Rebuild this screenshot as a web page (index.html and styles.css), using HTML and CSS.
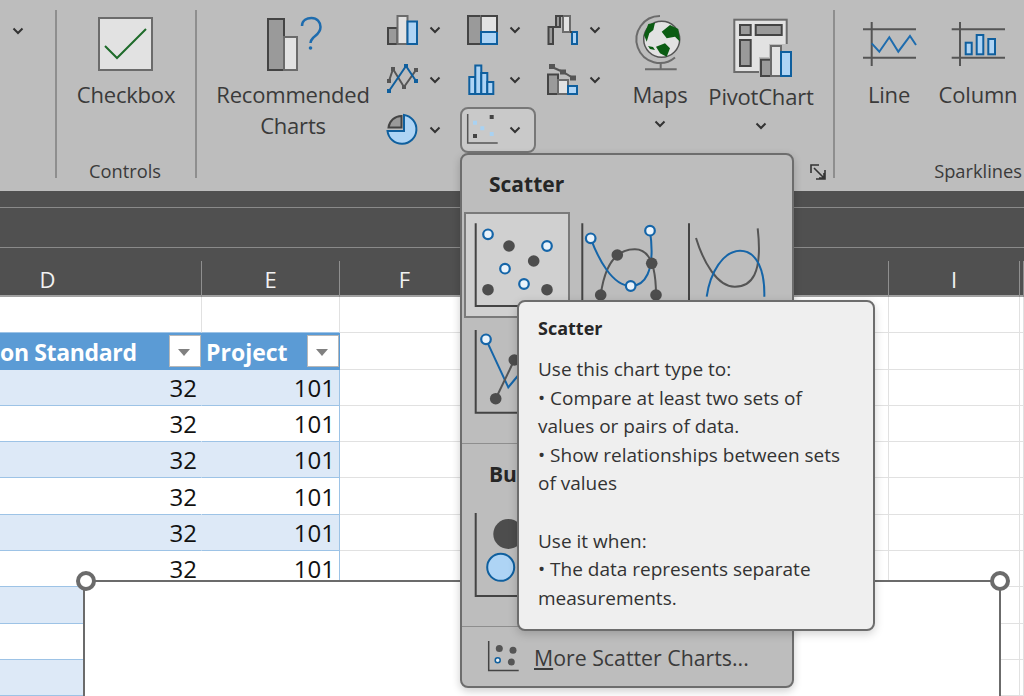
FILE: index.html
```html
<!DOCTYPE html>
<html lang="en">
<head>
    <meta charset="UTF-8">
    <meta name="viewport" content="width=device-width, initial-scale=1.0">
    <title>Insert Scatter Chart</title>
    <link rel="stylesheet" href="styles.css">
</head>
<body>
    <svg class="defs" width="0" height="0">
        <symbol id="chev" viewBox="0 0 12 8"><path d="M1.5 1.5 6 6l4.500-4.500" fill="none" stroke="#333" stroke-width="2"/></symbol>
    </svg>

    <div class="ribbon">
        <div class="group stub">
            <svg class="chev"><use href="#chev"/></svg>
        </div>
        <div class="sep"></div>
        <div class="group controls">
            <div class="group-body">
                <div class="big-btn wide">
                    <svg class="big-icon" viewBox="0 0 64 64">
                        <rect class="sheet" x="5" y="2" width="53" height="52"/>
                        <path d="M11 30 23 42 52 13" fill="none" stroke="#1e6b2a" stroke-width="2"/>
                    </svg>
                    <span>Checkbox</span>
                </div>
            </div>
            <div class="group-name"><span></span><span>Controls</span><span></span></div>
        </div>
        <div class="sep"></div>
        <div class="group charts">
            <div class="group-body">
                <div class="big-btn recommended">
                    <svg class="big-icon" viewBox="0 0 64 64">
                        <rect class="grey" x="7" y="3" width="16" height="51"/>
                        <rect class="pale" x="23" y="21" width="13" height="33"/>
                        <path d="M41 10C41 4 46 2 50.500 2 56 2 59.500 6 59.500 11 59.500 17 55 19 52 22 50 24 49.500 25 49.500 27" fill="none" stroke="#1e6cae" stroke-width="2.500"/>
                        <circle cx="49.500" cy="32" r="1.800" fill="#1e6cae"/>
                    </svg>
                    <span>Recommended<br>Charts</span>
                </div>
                <div class="chart-grid">
                    <div class="small-btn">
                        <svg class="small-icon" viewBox="0 0 32 32">
                            <rect class="grey" x="2" y="14" width="9.500" height="16"/>
                            <rect class="pale" x="11.500" y="2" width="10" height="28"/>
                            <rect class="blue" x="21.500" y="7.500" width="9.500" height="22.500"/>
                        </svg>
                        <svg class="chev"><use href="#chev"/></svg>
                    </div>
                    <div class="small-btn">
                        <svg class="small-icon" viewBox="0 0 32 32">
                            <rect class="grey" x="2" y="2" width="13" height="28"/>
                            <rect class="pale" x="15" y="2" width="16" height="16"/>
                            <rect class="blue" x="15" y="18" width="16" height="12"/>
                            <path d="M15 2H31V18" fill="none" stroke="#444" stroke-width="2"/>
                        </svg>
                        <svg class="chev"><use href="#chev"/></svg>
                    </div>
                    <div class="small-btn">
                        <svg class="small-icon" viewBox="0 0 32 32">
                            <rect class="grey" x="2.500" y="13" width="4.500" height="17"/>
                            <rect class="grey" x="10" y="2" width="4" height="11"/>
                            <rect class="pale" x="17" y="2" width="7" height="16"/>
                            <rect class="blue" x="26" y="18" width="5" height="12"/>
                            <path d="M7 13H10M14 2H17M24 18H26" stroke="#444" stroke-width="2"/>
                        </svg>
                        <svg class="chev"><use href="#chev"/></svg>
                    </div>
                    <div class="small-btn">
                        <svg class="small-icon" viewBox="0 0 32 32">
                            <path d="M3 17 7 5 18 23 30 6" fill="none" stroke="#555" stroke-width="2"/>
                            <path d="M3 27 20 2 30 17" fill="none" stroke="#0f5f9e" stroke-width="2"/>
                            <path d="M1 15h4v4H1zM5 3h4v4H5zM16 21h4v4h-4zM28 4h4v4h-4z" fill="#555"/>
                            <path d="M1 25h4v4H1zM18 0h4v4h-4zM28 15h4v4h-4z" fill="#0f5f9e"/>
                        </svg>
                        <svg class="chev"><use href="#chev"/></svg>
                    </div>
                    <div class="small-btn">
                        <svg class="small-icon" viewBox="0 0 32 32">
                            <rect class="blue" x="3.300" y="13" width="6" height="17"/>
                            <rect class="blue" x="9.300" y="1.500" width="6" height="28.500"/>
                            <rect class="blue" x="15.300" y="9" width="6" height="21"/>
                            <rect class="blue" x="21.300" y="18" width="6" height="12"/>
                        </svg>
                        <svg class="chev"><use href="#chev"/></svg>
                    </div>
                    <div class="small-btn">
                        <svg class="small-icon" viewBox="0 0 32 32">
                            <rect class="grey" x="2" y="10.500" width="10" height="19.500"/>
                            <rect class="pale" x="12" y="16" width="10" height="14"/>
                            <rect class="blue" x="22" y="22" width="9" height="8"/>
                            <path d="M6 3 17 8 27 14" fill="none" stroke="#555" stroke-width="2"/>
                            <path d="M3 0h6v5H3zM14 5.500h6v5h-6zM24 11.500h6v5h-6z" fill="#555"/>
                        </svg>
                        <svg class="chev"><use href="#chev"/></svg>
                    </div>
                    <div class="small-btn">
                        <svg class="small-icon" viewBox="0 0 32 32">
                            <path class="blue" d="M18 1A14.500 14.500 0 1 1 1.500 17H18Z"/>
                            <path class="grey" d="M15.500 2A13 13 0 0 0 2.500 13.500H15.500Z"/>
                        </svg>
                        <svg class="chev"><use href="#chev"/></svg>
                    </div>
                    <div class="small-btn open">
                        <svg class="small-icon" viewBox="0 0 32 32">
                            <path d="M1.700 0V29H31.700" fill="none" stroke="#555" stroke-width="1.500"/>
                            <path d="M23.700 1h4v4h-4zM7 20h4v4H7z" fill="#444"/>
                            <path d="M7 6.700h4v4H7zM14.300 12.300h4v4h-4zM23.700 18h4v4h-4z" fill="#a9d2f2"/>
                        </svg>
                        <svg class="chev"><use href="#chev"/></svg>
                    </div>
                </div>
                <div class="big-btn maps">
                    <svg class="big-icon" viewBox="0 0 64 64">
                        <circle cx="33.700" cy="23.300" r="18" fill="#e2e2e2" stroke="#555" stroke-width="1.500"/>
                        <path d="M16 19 20.300 8 27 6.700 25.300 14 21.300 17.300 18.700 25.700Z" fill="#0b5c13"/>
                        <path d="M33.700 15.700 42 9 50.300 13 52 25.700 47 20.700 38.700 22.300Z" fill="#0b5c13"/>
                        <path d="M28 30.700 37 27.300 42 32.300 38.700 40.700 32 37.300Z" fill="#0b5c13"/>
                        <path d="M20 30 25 31 27 34 22 33Z" fill="#0b5c13"/>
                        <path d="M32 0A23.500 23.500 0 1 0 47 41.500" fill="none" stroke="#6b6b6b" stroke-width="2"/>
                        <path d="M32.700 46.700V53.300M17 53.300H48.700" fill="none" stroke="#6b6b6b" stroke-width="2"/>
                    </svg>
                    <span>Maps</span>
                    <svg class="chev"><use href="#chev"/></svg>
                </div>
                <div class="big-btn pivot">
                    <svg class="big-icon" viewBox="0 0 64 64">
                        <rect class="sheet" x="5.300" y="1.700" width="52.400" height="52.300"/>
                        <rect class="grey" x="11" y="7" width="10.700" height="10"/>
                        <rect class="grey" x="26.700" y="7" width="26" height="10"/>
                        <rect class="grey" x="11" y="22" width="10.700" height="26"/>
                        <path d="M30 39H40V26H64V60H30Z" fill="#bdbdbd"/>
                        <rect class="grey" x="32" y="41.700" width="10" height="16.300"/>
                        <rect class="pale" x="42" y="28" width="10" height="30"/>
                        <rect class="blue" x="52" y="34" width="10" height="24"/>
                    </svg>
                    <span>PivotChart</span>
                    <svg class="chev"><use href="#chev"/></svg>
                </div>
            </div>
            <div class="group-name launcher-row">
                <svg class="launcher" viewBox="0 0 16 16">
                    <path d="M15 6V15H6M1 9V1H9M4 4 14 14M9 14H14V9" fill="none" stroke="#333" stroke-width="1.600"/>
                </svg>
            </div>
        </div>
        <div class="sep"></div>
        <div class="group sparklines">
            <div class="group-body">
                <div class="big-btn spark-line">
                    <svg class="big-icon" viewBox="0 0 64 64">
                        <path d="M14.700 6V50M6 13.300H59M6 41.700H59" fill="none" stroke="#555" stroke-width="2"/>
                        <path d="M14.700 27.300 22.300 35.700 32.300 21.300 41.300 35.700 53 20 59 29" fill="none" stroke="#1e6cae" stroke-width="2"/>
                    </svg>
                    <span>Line</span>
                </div>
                <div class="big-btn spark-column">
                    <svg class="big-icon" viewBox="0 0 64 64">
                        <path d="M14 6V50M5.700 13.300H59M5.700 41.700H59" fill="none" stroke="#555" stroke-width="2"/>
                        <rect class="blue" x="19.700" y="26.700" width="6" height="11.600"/>
                        <rect class="blue" x="30.700" y="19" width="6.600" height="19.300"/>
                        <rect class="blue" x="42.300" y="23" width="6.700" height="15.300"/>
                    </svg>
                    <span>Column</span>
                </div>
            </div>
            <div class="group-name spark-name"><span>Sparklines</span></div>
        </div>
    </div>

    <div class="formula-bar"></div>

    <div class="sheet-grid">
        <div class="col-heads">
            <div class="col-d">D</div><div>E</div><div>F</div><div>G</div><div>H</div><div>I</div><div></div>
        </div>
        <div class="row blank"><div class="cell"></div><div class="cell"></div><div class="cell"></div><div class="cell"></div><div class="cell"></div><div class="cell"></div><div class="cell"></div></div>
        <div class="row table-head">
            <div class="cell"><span class="head-cut">on Standard</span><span class="filter"></span></div>
            <div class="cell"><span>Project</span><span class="filter"></span></div>
            <div class="cell"></div><div class="cell"></div><div class="cell"></div><div class="cell"></div><div class="cell"></div>
        </div>
        <div class="row band"><div class="cell num">32</div><div class="cell num">101</div><div class="cell"></div><div class="cell"></div><div class="cell"></div><div class="cell"></div><div class="cell"></div></div>
        <div class="row"><div class="cell num">32</div><div class="cell num">101</div><div class="cell"></div><div class="cell"></div><div class="cell"></div><div class="cell"></div><div class="cell"></div></div>
        <div class="row band"><div class="cell num">32</div><div class="cell num">101</div><div class="cell"></div><div class="cell"></div><div class="cell"></div><div class="cell"></div><div class="cell"></div></div>
        <div class="row"><div class="cell num">32</div><div class="cell num">101</div><div class="cell"></div><div class="cell"></div><div class="cell"></div><div class="cell"></div><div class="cell"></div></div>
        <div class="row band"><div class="cell num">32</div><div class="cell num">101</div><div class="cell"></div><div class="cell"></div><div class="cell"></div><div class="cell"></div><div class="cell"></div></div>
        <div class="row"><div class="cell num">32</div><div class="cell num">101</div><div class="cell"></div><div class="cell"></div><div class="cell"></div><div class="cell"></div><div class="cell"></div></div>
        <div class="row band"><div class="cell"></div><div class="cell"></div><div class="cell"></div><div class="cell"></div><div class="cell"></div><div class="cell"></div><div class="cell"></div></div>
        <div class="row"><div class="cell"></div><div class="cell"></div><div class="cell"></div><div class="cell"></div><div class="cell"></div><div class="cell"></div><div class="cell"></div></div>
        <div class="row band"><div class="cell"></div><div class="cell"></div><div class="cell"></div><div class="cell"></div><div class="cell"></div><div class="cell"></div><div class="cell"></div></div>
    </div>

    <!-- chart object sitting on the sheet -->
    <div class="chart-object">
        <span class="handle left"></span>
        <span class="handle right"></span>
    </div>

    <div class="menu">
        <h3>Scatter</h3>
        <div class="thumbs">
            <div class="thumb selected">
                <svg viewBox="1 1 102 102">
                    <path class="axis" d="M10.700 10.300V93H95"/>
                    <circle class="dot" cx="44" cy="33" r="5.800"/>
                    <circle class="dot" cx="68.700" cy="48" r="5.800"/>
                    <circle class="dot" cx="23" cy="76.700" r="5.800"/>
                    <circle class="dot" cx="82" cy="76.700" r="5.800"/>
                    <circle class="ring" cx="23" cy="21.300" r="4.800"/>
                    <circle class="ring" cx="82" cy="33" r="4.800"/>
                    <circle class="ring" cx="40" cy="55.700" r="4.800"/>
                    <circle class="ring" cx="59" cy="71" r="4.800"/>
                </svg>
            </div>
            <div class="thumb">
                <svg viewBox="1 1 102 102">
                    <path class="axis" d="M10.300 10.300V93H95"/>
                    <path class="curve-g" d="M28.700 82C32 58 41 36 63 36.300 78 36.300 84 55 84 82"/>
                    <path class="curve-b" d="M18.700 25.300C26 45 40 73 58.700 73 72 73 84 60 78 17.700"/>
                    <circle class="dot" cx="28.700" cy="82" r="5.800"/>
                    <circle class="dot" cx="45.300" cy="42" r="5.800"/>
                    <circle class="dot" cx="79.700" cy="50.300" r="5.800"/>
                    <circle class="dot" cx="84" cy="82" r="5.800"/>
                    <circle class="ring" cx="18.700" cy="25.300" r="4.800"/>
                    <circle class="ring" cx="78" cy="17.700" r="4.800"/>
                    <circle class="ring" cx="58.700" cy="73" r="4.800"/>
                </svg>
            </div>
            <div class="thumb">
                <svg viewBox="1 1 102 102">
                    <path class="axis" d="M10 10.300V93H95"/>
                    <path class="curve-g" d="M17 25C24 48 38 74 56 73.700 72 73.700 84 62 78.700 15.300"/>
                    <path class="curve-b" d="M27.700 83.700C31 60 44 38 61 37.700 78 37.700 86 58 85.300 83.700"/>
                </svg>
            </div>
            <div class="thumb">
                <svg viewBox="1 1 102 102">
                    <path class="axis" d="M10.700 10V92.700H95"/>
                    <path class="curve-b" d="M21 19.300 43.300 67.300 56 52"/>
                    <path class="curve-g" d="M30.700 78.700 49.300 40"/>
                    <circle class="dot" cx="49.300" cy="40" r="5.800"/>
                    <circle class="dot" cx="30.700" cy="78.700" r="5.800"/>
                    <circle class="ring" cx="21" cy="19.300" r="4.800"/>
                </svg>
            </div>
        </div>
        <div class="menu-rule"></div>
        <h3 class="under-tip">Bubble</h3>
        <div class="thumbs">
            <div class="thumb">
                <svg viewBox="1 1 102 102">
                    <path class="axis" d="M10.700 10V93H95"/>
                    <circle class="dot" cx="43.300" cy="31" r="15"/>
                    <circle class="bubble" cx="35.700" cy="64.300" r="13.500"/>
                </svg>
            </div>
        </div>
        <div class="menu-rule"></div>
        <div class="more">
            <svg class="small-icon" viewBox="0 0 32 32">
                <path class="axis thin" d="M1.700 0V29.500H31.700"/>
                <circle cx="12.300" cy="7.500" r="3.500" fill="#555"/>
                <circle cx="26" cy="9.300" r="3.500" fill="#555"/>
                <circle cx="10.700" cy="19.300" r="2.500" fill="#eee" stroke="#0f5f9e" stroke-width="1.500"/>
                <circle cx="24.300" cy="21" r="3.500" fill="#555"/>
            </svg>
            <span><u>M</u>ore Scatter Charts...</span>
        </div>
    </div>

    <div class="tooltip">
        <h4>Scatter</h4>
        <p>Use this chart type to:<br>
        • Compare at least two sets of<br>
        values or pairs of data.<br>
        • Show relationships between sets<br>
        of values</p>
        <p>Use it when:<br>
        • The data represents separate<br>
        measurements.</p>
    </div>
</body>
</html>
```

FILE: styles.css
```css
* {
    margin: 0;
    padding: 0;
    box-sizing: border-box;
}
html, body {
    height: 696px;
    overflow: hidden;
}
body {
    position: relative;
    background: #fff;
    font-family: "Open Sans", "Noto Sans", "Liberation Sans", sans-serif;
    color: #3a3a3a;
}
.defs {
    position: absolute;
}
svg {
    display: block;
    flex: none;
}
.chev {
    width: 12px;
    height: 8px;
}

/* ribbon */
.ribbon {
    display: flex;
    height: 191px;
    background: #bdbdbd;
}
.sep {
    width: 2px;
    margin: 10px 0 13px;
    background: #8e8e8e;
}
.group {
    display: flex;
    flex-direction: column;
}
.stub {
    width: 55px;
    padding: 27px 0 0 12px;
}
.controls {
    width: 138px;
}
.charts {
    width: 636px;
}
.sparklines {
    flex: 1;
}
.group-body {
    display: flex;
    height: 159px;
}
.group-name {
    display: grid;
    grid-template-columns: 1fr auto 1fr;
    height: 24px;
    align-items: center;
    padding-right: 2px;
    font-size: 18.300px;
    line-height: 24px;
    white-space: nowrap;
}
.launcher-row {
    display: flex;
    justify-content: flex-end;
    padding-right: 7px;
}
.spark-name {
    display: flex;
    justify-content: flex-end;
    padding-right: 2px;
}
.launcher {
    width: 16px;
    height: 16px;
    margin-top: 2px;
}
.big-btn {
    display: flex;
    flex-direction: column;
    align-items: center;
    padding-top: 16px;
    font-size: 22px;
    line-height: 31px;
    text-align: center;
    letter-spacing: -0.2px;
    white-space: nowrap;
}
.big-btn span {
    margin-top: -1px;
}
.big-btn .chev {
    margin-top: 10px;
}
.big-icon {
    width: 64px;
    height: 64px;
    overflow: visible;
}
.wide {
    width: 138px;
}
.recommended {
    width: 183px;
    padding-left: 9px;
}
.maps {
    width: 80px;
}
.pivot {
    width: 122px;
    padding-top: 18px;
}
.spark-line {
    width: 90px;
    margin-left: 9px;
}
.spark-column {
    width: 88px;
}
.chart-grid {
    display: grid;
    grid-template-columns: repeat(3, 80px);
    grid-auto-rows: 50px;
    padding-top: 7px;
}
.small-btn {
    display: flex;
    align-items: center;
    gap: 11px;
    width: 76px;
    height: 46px;
    padding: 0 4px;
    border: 2px solid transparent;
    border-radius: 8px;
}
.small-btn.open {
    border-color: #777;
    background: #c9c9c9;
}
.small-icon {
    width: 32px;
    height: 32px;
    overflow: visible;
}

/* shared icon fills */
.sheet {
    fill: #e2e2e2;
    stroke: #6b6b6b;
    stroke-width: 2;
}
.grey {
    fill: #9a9a9a;
    stroke: #444;
    stroke-width: 2;
}
.pale {
    fill: #e2e2e2;
    stroke: #6b6b6b;
    stroke-width: 2;
}
.blue {
    fill: #aed4f5;
    stroke: #0f5f9e;
    stroke-width: 2;
}

/* dark bars above the sheet */
.formula-bar {
    height: 57px;
    background: #505050;
    border-bottom: 1px solid #8a8a8a;
}
.formula-bar::before {
    content: "";
    display: block;
    height: 16px;
    border-bottom: 1px solid #8a8a8a;
}

/* sheet */
.sheet-grid {
    height: 448px;
    overflow: hidden;
}
.col-heads, .row {
    display: grid;
    grid-template-columns: 202px 138px 130px 210px 209px 131px 4px;
}
.col-heads {
    height: 49px;
    background: #505050;
    border-bottom: 2px solid #a0a0a0;
    color: #f2f2f2;
    font-size: 22px;
    text-align: center;
}
.col-heads div {
    border-right: 1px solid #8f8f8f;
    margin-top: 13px;
    line-height: 37px;
}
.col-heads .col-d {
    padding-right: 106px;
}
.row {
    height: 36.300px;
}
.cell {
    display: flex;
    align-items: center;
    justify-content: space-between;
    overflow: hidden;
    border-right: 1px solid #e1e1e1;
    border-bottom: 1px solid #e1e1e1;
    color: #111;
    font-size: 24px;
    white-space: nowrap;
}
.num {
    justify-content: flex-end;
    padding-right: 4px;
}
.row.band .cell:nth-child(-n+2) {
    background: #dde9f7;
    border-bottom-color: #9dc3e6;
}
.row:not(.band):not(.table-head) .cell:nth-child(-n+2) {
    border-bottom-color: #9dc3e6;
}
.row:not(.blank):not(.table-head) .cell:nth-child(2) {
    border-right-color: #9dc3e6;
}
.row:not(.blank) .cell:first-child {
    border-right-color: transparent;
}
.table-head .cell:nth-child(-n+2) {
    background: #5b9bd5;
    border-color: #5b9bd5;
    color: #fff;
    font-size: 23px;
    font-weight: 700;
}
.table-head .cell:nth-child(2) {
    padding-left: 4px;
}
.table-head .cell span:first-child {
    margin-top: 2px;
}
.head-cut {
    letter-spacing: -0.35px;
}
.filter {
    position: relative;
    flex: none;
    width: 32px;
    height: 32px;
    background: #fff;
    border: 1px solid #b8b8b8;
}
.filter::after {
    content: "";
    position: absolute;
    left: 8px;
    top: 13px;
    border-style: solid;
    border-width: 7px 6.500px 0;
    border-color: #808080 transparent transparent;
}

/* chart object */
.chart-object {
    position: absolute;
    left: 83px;
    top: 580px;
    width: 918px;
    height: 116px;
    background: #fff;
    border: 2px solid #6b6b6b;
    border-bottom: 0;
}
.handle {
    position: absolute;
    top: -11px;
    width: 20px;
    height: 20px;
    background: #fff;
    border: 4px solid #6b6b6b;
    border-radius: 50%;
}
.handle.left {
    left: -9px;
}
.handle.right {
    right: -11px;
}

/* chart gallery menu */
.menu {
    position: absolute;
    left: 460px;
    top: 153px;
    width: 334px;
    height: 535px;
    background: #bdbdbd;
    border: 2px solid #6d6d6d;
    border-radius: 8px;
    box-shadow: 0 3px 8px rgba(0, 0, 0, 0.2);
}
.menu h3 {
    height: 30px;
    margin: 14px 0 13px 27px;
    color: #262626;
    font-size: 21px;
    line-height: 30px;
}
.menu h3.under-tip {
    width: 29px;
    overflow: hidden;
    white-space: nowrap;
}
.thumbs {
    display: grid;
    grid-template-columns: repeat(3, 107px);
    grid-auto-rows: 107px;
    margin-left: 2px;
}
.thumb {
    width: 106px;
    height: 106px;
    border: 2px solid transparent;
}
.thumb svg {
    width: 102px;
    height: 102px;
}
.thumb.selected {
    border-color: #7a7a7a;
    background: #d0d0d0;
}
.menu-rule {
    height: 1px;
    margin-top: 17px;
    background: #8e8e8e;
}
.menu-rule + h3 {
    margin-top: 15px;
}
.axis {
    fill: none;
    stroke: #444;
    stroke-width: 2;
}
.axis.thin {
    stroke-width: 1.500;
}
.dot {
    fill: #4d4d4d;
}
.ring {
    fill: #eaf3fb;
    stroke: #1565a8;
    stroke-width: 2.200;
}
.curve-g {
    fill: none;
    stroke: #555;
    stroke-width: 2;
}
.curve-b {
    fill: none;
    stroke: #1565a8;
    stroke-width: 2;
}
.bubble {
    fill: #aed4f5;
    stroke: #0f5f9e;
    stroke-width: 2;
}
.more {
    display: flex;
    align-items: center;
    gap: 15px;
    height: 60px;
    padding-left: 25px;
    font-size: 21.300px;
    white-space: nowrap;
}

/* hover tooltip */
.tooltip {
    position: absolute;
    left: 517px;
    top: 300px;
    width: 358px;
    padding: 16px 19px 17px;
    background: #efefef;
    border: 2px solid #6d6d6d;
    border-radius: 8px;
    box-shadow: 0 3px 10px rgba(0, 0, 0, 0.18);
    color: #333;
    font-size: 19px;
    line-height: 28.600px;
    white-space: nowrap;
}
.tooltip h4 {
    margin-bottom: 17px;
    color: #262626;
    font-size: 18px;
    line-height: 20px;
}
.tooltip p + p {
    margin-top: 28.600px;
}
```
